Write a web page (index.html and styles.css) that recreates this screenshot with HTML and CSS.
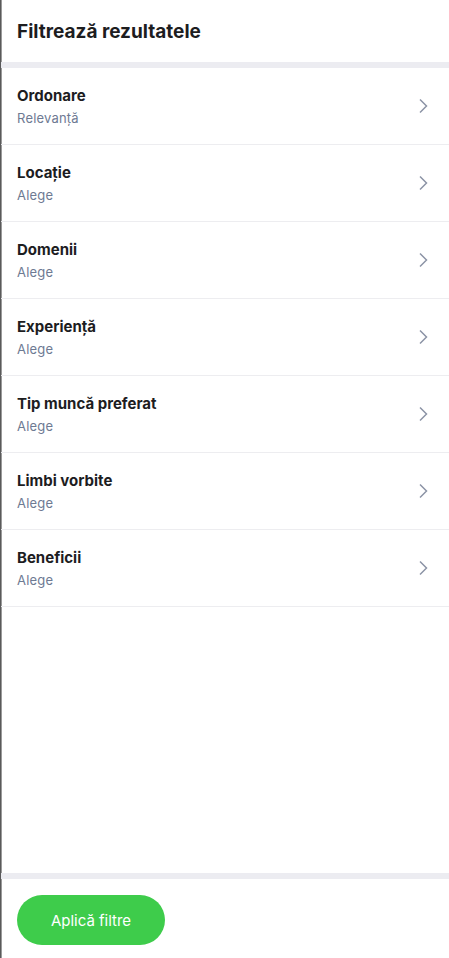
FILE: index.html
```html
<!DOCTYPE html>
<html lang="ro">
<head>
<meta charset="utf-8">
<link rel="stylesheet" href="styles.css">
</head>
<body>
<div class="drawer">
  <header class="head"><h1 class="title">Filtrează rezultatele</h1></header>
  <div class="sep"></div>
  <ul class="list">
    <li class="row"><div class="txt"><div class="name">Ordonare</div><div class="val">Relevanță</div></div><svg class="chev" viewBox="0 0 10 16"><path d="M2 1.5 L8.5 8 L2 14.5"/></svg></li>
    <li class="row"><div class="txt"><div class="name">Locație</div><div class="val">Alege</div></div><svg class="chev" viewBox="0 0 10 16"><path d="M2 1.5 L8.5 8 L2 14.5"/></svg></li>
    <li class="row"><div class="txt"><div class="name">Domenii</div><div class="val">Alege</div></div><svg class="chev" viewBox="0 0 10 16"><path d="M2 1.5 L8.5 8 L2 14.5"/></svg></li>
    <li class="row"><div class="txt"><div class="name">Experiență</div><div class="val">Alege</div></div><svg class="chev" viewBox="0 0 10 16"><path d="M2 1.5 L8.5 8 L2 14.5"/></svg></li>
    <li class="row"><div class="txt"><div class="name">Tip muncă preferat</div><div class="val">Alege</div></div><svg class="chev" viewBox="0 0 10 16"><path d="M2 1.5 L8.5 8 L2 14.5"/></svg></li>
    <li class="row"><div class="txt"><div class="name">Limbi vorbite</div><div class="val">Alege</div></div><svg class="chev" viewBox="0 0 10 16"><path d="M2 1.5 L8.5 8 L2 14.5"/></svg></li>
    <li class="row"><div class="txt"><div class="name">Beneficii</div><div class="val">Alege</div></div><svg class="chev" viewBox="0 0 10 16"><path d="M2 1.5 L8.5 8 L2 14.5"/></svg></li>
  </ul>
  <div class="spacer"></div>
  <div class="sep"></div>
  <footer class="foot"><button class="apply">Aplică filtre</button></footer>
</div>
</body>
</html>
```
FILE: styles.css
```css
* { box-sizing: border-box; }
html, body { margin: 0; padding: 0; height: 100%; }
body {
  font-family: Inter, "Noto Sans", sans-serif;
  background: #fff;
}
.drawer {
  height: 958px;
  display: flex;
  flex-direction: column;
  border-left: 1px solid #5a5a5a;
  box-shadow: inset 1px 0 0 #9a9a9a;
  background: #fff;
}
.head {
  height: 62px;
  display: flex;
  align-items: center;
  padding: 0 16px;
}
.title {
  margin: 0;
  font-size: 19px;
  font-weight: 700;
  color: #1d1d1f;
  letter-spacing: 0;
}
.sep { height: 6px; background: #ececf1; flex: none; }
.list { list-style: none; margin: 0; padding: 0; }
.row {
  height: 77px;
  display: flex;
  align-items: center;
  justify-content: space-between;
  padding: 0 21px 0 16px;
  border-bottom: 1px solid #ededf0;
}
.txt { display: flex; flex-direction: column; gap: 5px; padding-bottom: 0; }
.name { font-size: 15px; font-weight: 700; color: #1d1d1f; line-height: 19px; }
.val { font-size: 13px; color: #6e7a93; line-height: 17px; letter-spacing: 0.2px; }
.chev { width: 10px; height: 16px; fill: none; stroke: #8c94a6; stroke-width: 1.5; }
.spacer { flex: 1; }
.foot { height: 79px; padding: 16px 16px 0; flex: none; }
.apply {
  width: 148px;
  height: 50px;
  border: 0;
  border-radius: 25px;
  background: #3ecc4b;
  color: #fff;
  font-family: Inter, sans-serif;
  font-size: 15px;
  font-weight: 400;
}
```
